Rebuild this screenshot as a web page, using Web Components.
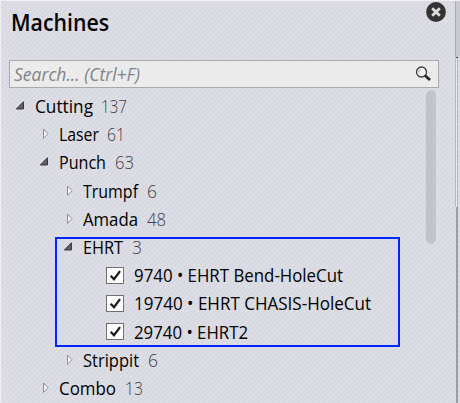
<!DOCTYPE html>
<html lang="en"><head><meta charset="utf-8"><title>Machines</title>
<style>body{margin:0;overflow:hidden;font-family:"Open Sans","Noto Sans",sans-serif;color:#000}</style></head>
<body>
<machines-panel></machines-panel>
<script>
const attach=(el,html)=>{el.attachShadow({mode:'open'}).innerHTML=html;};

/* A run of text condensed or widened to a given width. */
customElements.define('fit-text',class extends HTMLElement{
  connectedCallback(){
    attach(this,`<style>:host{display:block;flex:none;white-space:pre;width:var(--w)}span{display:inline-block;transform-origin:0 50%}</style><span><slot></slot></span>`);
    const w=+this.getAttribute('w');
    this.style.setProperty('--w',w+'px');
    const s=this.shadowRoot.querySelector('span');
    s.style.transform=`scaleX(${w/s.getBoundingClientRect().width})`;
  }
});

customElements.define('tree-arrow',class extends HTMLElement{
  connectedCallback(){
    attach(this,`<style>:host{display:block;flex:none;width:20px;height:12px}svg{display:block}</style>
    <svg width="20" height="12">${this.hasAttribute('open')
      ?'<path d="M8.5 1.7V9H1.3Z" fill="#5d5d62" stroke="#3c3c40"/>'
      :'<path d="M4.5 1V10.4L9 5.7Z" fill="#f6f6f9" stroke="#8e8e94"/>'}</svg>`);
  }
});

customElements.define('check-box',class extends HTMLElement{
  connectedCallback(){
    attach(this,`<style>:host{display:block;flex:none;box-sizing:border-box;width:18px;height:17px;border:1px solid #707070;background:#fff}svg{display:block}</style>
    <svg width="16" height="15"><path d="M3.7 7.8 7 11.2 13 3.1" fill="none" stroke="#1c1c1c" stroke-width="2.3"/></svg>`);
  }
});

customElements.define('tree-node',class extends HTMLElement{
  connectedCallback(){
    const g=n=>this.getAttribute(n),lv=+g('level'),leaf=this.hasAttribute('leaf');
    attach(this,`<style>
      :host{display:flex;align-items:center;height:28.2px;font-size:18px;line-height:28px;box-sizing:border-box;padding-left:${leaf?105:14+lv*24}px}
      .n{color:#404046;font-weight:300;margin-left:${g('gap')||9}px}
      check-box{margin-right:10px}
    </style>${leaf?'<check-box></check-box>':`<tree-arrow ${this.hasAttribute('open')?'open':''}></tree-arrow>`}
    <fit-text w="${g('w')}">${g('label')}</fit-text>${leaf?'':`<fit-text class="n" w="${g('cw')}">${g('count')}</fit-text>`}`);
  }
});

customElements.define('search-field',class extends HTMLElement{
  connectedCallback(){
    attach(this,`<style>:host{display:flex;align-items:center;justify-content:space-between;box-sizing:border-box;width:430px;height:28px;border:1px solid #a9a9ad;background:#ebebeb;padding:0 6px 0 4px;font-size:17.6px;font-style:italic;line-height:26px;color:#838389}svg{flex:none}</style>
    <fit-text w="126">Search... (Ctrl+F)</fit-text>
    <svg width="17" height="18"><circle cx="6.5" cy="7" r="5" fill="#f4f4f4" stroke="#3d3d3d" stroke-width="1.3"/><path d="M3.6 7.5A3.2 3.2 0 0 1 6 4" fill="none" stroke="#aaa"/><path d="M10 10.5 15 15" stroke="#292929" stroke-width="2.8"/></svg>`);
  }
});

customElements.define('close-button',class extends HTMLElement{
  connectedCallback(){
    attach(this,`<style>:host{display:block}svg{display:block}</style>
    <svg width="20" height="20"><circle cx="10" cy="10" r="9.9" fill="#333"/><path d="M6.2 6.2 13.8 13.8M13.8 6.2 6.2 13.8" stroke="#dedee0" stroke-width="2.8"/></svg>`);
  }
});

customElements.define('machines-panel',class extends HTMLElement{
  connectedCallback(){
    attach(this,`<style>
      :host{display:block;position:relative;box-sizing:border-box;width:460px;height:403px;overflow:hidden;border-top:1px solid #f0f0f3;border-left:1px solid #eeeef1;
        background:linear-gradient(135deg,#dcdde5 25%,#d6d7df 25% 50%,#dcdde5 50% 75%,#d6d7df 75%) 0 0/5px 5px}
      header{height:59px;box-sizing:border-box;padding:6px 0 0 10px;font-size:22.5px;line-height:32px;font-weight:600}
      search-field{margin-left:8px}
      .tree{margin-top:4px}
      close-button{position:absolute;left:425px;top:1px}
      .thumb{position:absolute;left:425px;top:89px;width:10px;height:154px;border-radius:5px;background:#c3c4c9}
      .mark{position:absolute;box-sizing:border-box;left:54px;top:236px;width:345px;height:110px;border:2px solid #0026ff}
      .edge{position:absolute;left:454px;top:0;bottom:0;width:5px;display:flex;flex-direction:column}
      .a{height:56px;background:#c8c9cf;border-left:1px solid #aaabb2}
      .b{height:1px;width:2px;margin-left:1px;background:#444}
      .c{height:149px;width:1px;border:solid #b7b8c0;border-width:0 1px;background:#e8e8ef}
      .d{flex:1;width:2px;background:#9d9da8;margin-left:1px}
    </style>
    <header><fit-text w="98">Machines</fit-text></header>
    <search-field></search-field>
    <div class="tree">
      <tree-node level="0" open label="Cutting" w="58" count="137" cw="26" gap="8"></tree-node>
      <tree-node level="1" label="Laser" w="40" count="61" cw="18" gap="8"></tree-node>
      <tree-node level="1" open label="Punch" w="47" count="63" cw="19" gap="9"></tree-node>
      <tree-node level="2" label="Trumpf" w="55" count="6" cw="10"></tree-node>
      <tree-node level="2" label="Amada" w="55" count="48" cw="19"></tree-node>
      <tree-node level="2" open label="EHRT" w="40" count="3" cw="10"></tree-node>
      <tree-node leaf label="9740 • EHRT Bend-HoleCut" w="209"></tree-node>
      <tree-node leaf label="19740 • EHRT CHASIS-HoleCut" w="237"></tree-node>
      <tree-node leaf label="29740 • EHRT2" w="114"></tree-node>
      <tree-node level="2" label="Strippit" w="56" count="6" cw="10"></tree-node>
      <tree-node level="1" label="Combo" w="57" count="13" cw="18"></tree-node>
    </div>
    <close-button></close-button><div class="thumb"></div><div class="mark"></div>
    <div class="edge"><div class="a"></div><div class="b"></div><div class="c"></div><div class="d"></div></div>`);
  }
});
</script>
</body></html>
